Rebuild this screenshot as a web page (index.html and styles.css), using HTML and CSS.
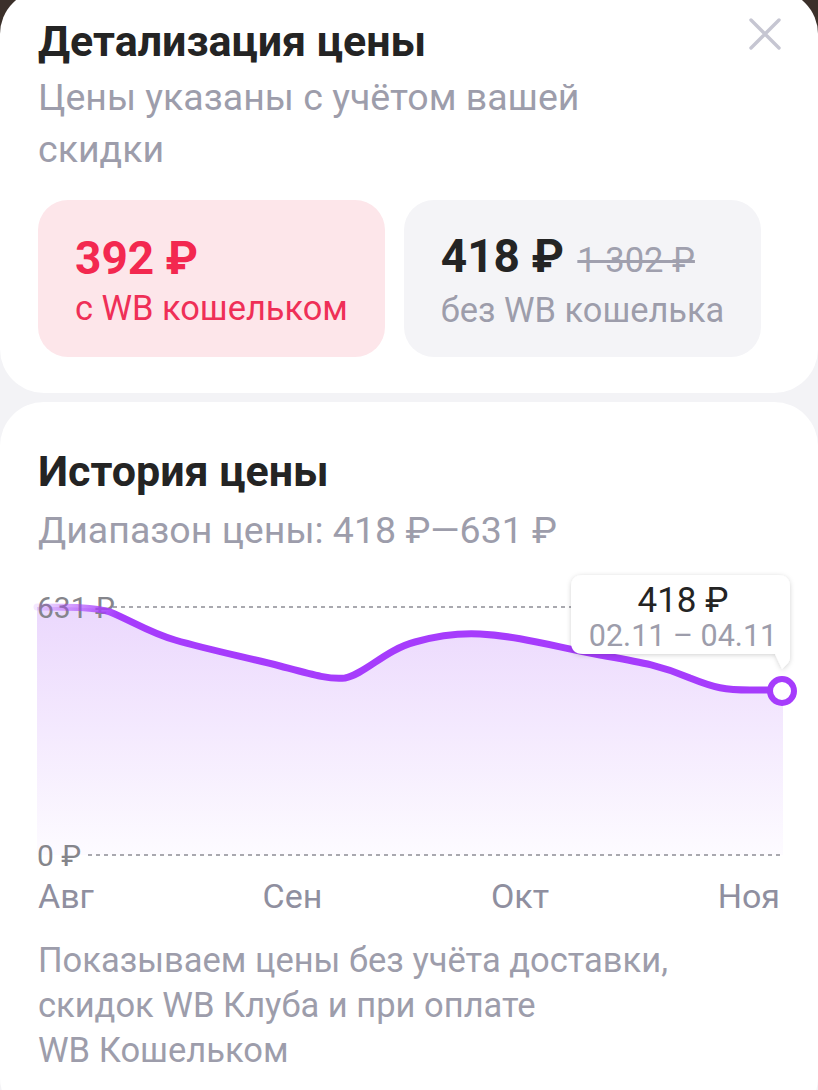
FILE: index.html
```html
<!DOCTYPE html>
<html lang="ru">
<head>
<meta charset="utf-8">
<title>Детализация цены</title>
<link rel="stylesheet" href="styles.css">
</head>
<body>
<div class="page">
  <section class="card card-top">
    <div class="head">
      <h1 class="title">Детализация цены</h1>
      <button class="close" aria-label="Закрыть">
        <svg width="34" height="34" viewBox="0 0 34 34"><path d="M3 3L31 31M31 3L3 31" stroke="#c6c6d2" stroke-width="3.4" stroke-linecap="round"/></svg>
      </button>
    </div>
    <p class="subtitle">Цены указаны с учётом вашей скидки</p>
    <div class="prices">
      <div class="price-card price-wallet">
        <div class="price-main">392 ₽</div>
        <div class="price-label">с WB кошельком</div>
      </div>
      <div class="price-card price-plain">
        <div class="price-main">418 ₽ <s class="price-old">1 302 ₽</s></div>
        <div class="price-label">без WB кошелька</div>
      </div>
    </div>
  </section>

  <section class="card card-history">
    <h2 class="title">История цены</h2>
    <p class="range">Диапазон цены: 418 ₽—631 ₽</p>
    <svg class="chart" width="818" height="310" viewBox="0 0 818 310">
      <defs>
        <linearGradient id="fillGrad" x1="0" y1="0" x2="0" y2="1">
          <stop offset="0" stop-color="#ebd8fd"/>
          <stop offset="1" stop-color="#fdfbff"/>
        </linearGradient>
        <linearGradient id="lineGrad" gradientUnits="userSpaceOnUse" x1="37" y1="0" x2="118" y2="0">
          <stop offset="0" stop-color="#a63cfc" stop-opacity="0.12"/>
          <stop offset="1" stop-color="#a63cfc" stop-opacity="1"/>
        </linearGradient>
        <filter id="shadow" x="-20%" y="-30%" width="140%" height="170%">
          <feDropShadow dx="0" dy="1" stdDeviation="2.5" flood-color="#000" flood-opacity="0.18"/>
        </filter>
      </defs>
      <path d="M37,37 C70,37 95,37 110,42 C130,50 150,63 175,70 C210,80 240,86 280,96 C310,104 330,110 345,108 C365,104 385,80 415,72 C440,65 460,63 480,64 C520,66 560,78 600,85 C640,92 660,95 690,108 C715,118 725,120 750,120 L783,120 L783,285 L37,285 Z" fill="url(#fillGrad)"/>
      <line x1="113" y1="37" x2="575" y2="37" stroke="#8d8d95" stroke-width="1.3" stroke-dasharray="4 4"/>
      <line x1="88" y1="285" x2="781" y2="285" stroke="#8d8d95" stroke-width="1.3" stroke-dasharray="4 4"/>
      <text class="axis" x="37" y="48">631 ₽</text>
      <text class="axis" x="37" y="296">0 ₽</text>
      <path d="M37,37 C70,37 95,37 110,42 C130,50 150,63 175,70 C210,80 240,86 280,96 C310,104 330,110 345,108 C365,104 385,80 415,72 C440,65 460,63 480,64 C520,66 560,78 600,85 C640,92 660,95 690,108 C715,118 725,120 750,120 L783,120" fill="none" stroke="url(#lineGrad)" stroke-width="7" stroke-linecap="round" stroke-linejoin="round"/>
      <path d="M583,5 H778 Q790,5 790,17 V88 Q790,90 788,93 L782,99 L775,84 H583 Q571,84 571,72 V17 Q571,5 583,5 Z" fill="#fff" filter="url(#shadow)"/>
      <text class="tip-price" x="683" y="42" text-anchor="middle">418 ₽</text>
      <text class="tip-date" x="683" y="76" text-anchor="middle">02.11 – 04.11</text>
      <circle cx="782" cy="121" r="12" fill="#fff" stroke="#a63cfc" stroke-width="6"/>
    </svg>
    <div class="months">
      <span>Авг</span><span>Сен</span><span>Окт</span><span>Ноя</span>
    </div>
    <p class="note">Показываем цены без учёта доставки, скидок WB Клуба и при оплате WB&nbsp;Кошельком</p>
  </section>
</div>
</body>
</html>
```

FILE: styles.css
```css
* { box-sizing: border-box; }

html, body {
  margin: 0;
  padding: 0;
}

body {
  width: 818px;
  height: 1090px;
  overflow: hidden;
  background: linear-gradient(#3b302a 0, #3b302a 40px, #f3f3f6 40px);
  font-family: Roboto, "Noto Sans", sans-serif;
  color: #242424;
}

.page {
  display: flex;
  flex-direction: column;
  gap: 9px;
  margin-top: -10px;
}

.card {
  background: #fff;
  border-radius: 44px;
}

.card-top {
  padding: 27px 38px 36px;
}

.head {
  display: flex;
  justify-content: space-between;
  align-items: flex-start;
}

.title {
  margin: 0;
  font-size: 43px;
  font-weight: 700;
  line-height: 48px;
  color: #242424;
}

.close {
  border: 0;
  background: none;
  padding: 0;
  margin: 0 -2px 0 0;
  width: 34px;
  height: 34px;
  cursor: pointer;
}

.subtitle {
  margin: 6px 0 0;
  max-width: 600px;
  font-size: 37.5px;
  line-height: 52px;
  color: #9d9dab;
}

.prices {
  display: flex;
  gap: 19px;
  margin-top: 25px;
}

.price-card {
  height: 157px;
  border-radius: 30px;
  padding: 0 37px;
  display: flex;
  flex-direction: column;
  justify-content: center;
}

.price-wallet { background: #fde6ea; }
.price-plain { background: #f4f4f7; }

.price-main {
  font-size: 46px;
  font-weight: 700;
  line-height: 52px;
  margin-top: 4px;
}

.price-wallet .price-main { color: #f3284f; }
.price-plain .price-main { color: #242424; }

.price-old {
  font-size: 34.5px;
  font-weight: 400;
  color: #a0a0ae;
  margin-left: 2px;
}

.price-label {
  font-size: 34.4px;
  line-height: 44px;
  margin-top: 2px;
}

.price-wallet .price-label { color: #ef2f57; }
.price-plain .price-label { color: #9d9dab; }

.card-history {
  padding: 45px 0 40px;
  min-height: 720px;
}

.card-history .title,
.range,
.months,
.note {
  margin-left: 38px;
  margin-right: 38px;
}

.range {
  margin-top: 13px;
  margin-bottom: 0;
  font-size: 37.5px;
  line-height: 44px;
  color: #9d9dab;
}

.chart {
  display: block;
  margin-top: 18px;
}

.axis {
  font-family: Roboto, sans-serif;
  font-size: 30px;
  fill: #85858b;
}

.tip-price {
  font-family: Roboto, sans-serif;
  font-size: 35px;
  fill: #242424;
}

.tip-date {
  font-family: Roboto, sans-serif;
  font-size: 30.5px;
  fill: #9d9dab;
}

.months {
  display: flex;
  justify-content: space-between;
  font-size: 34px;
  line-height: 44px;
  color: #8f8f9f;
  margin-top: -6px;
}

.note {
  margin-top: 20px;
  margin-bottom: 0;
  max-width: 700px;
  font-size: 34.5px;
  line-height: 45px;
  color: #9d9dab;
}
```
